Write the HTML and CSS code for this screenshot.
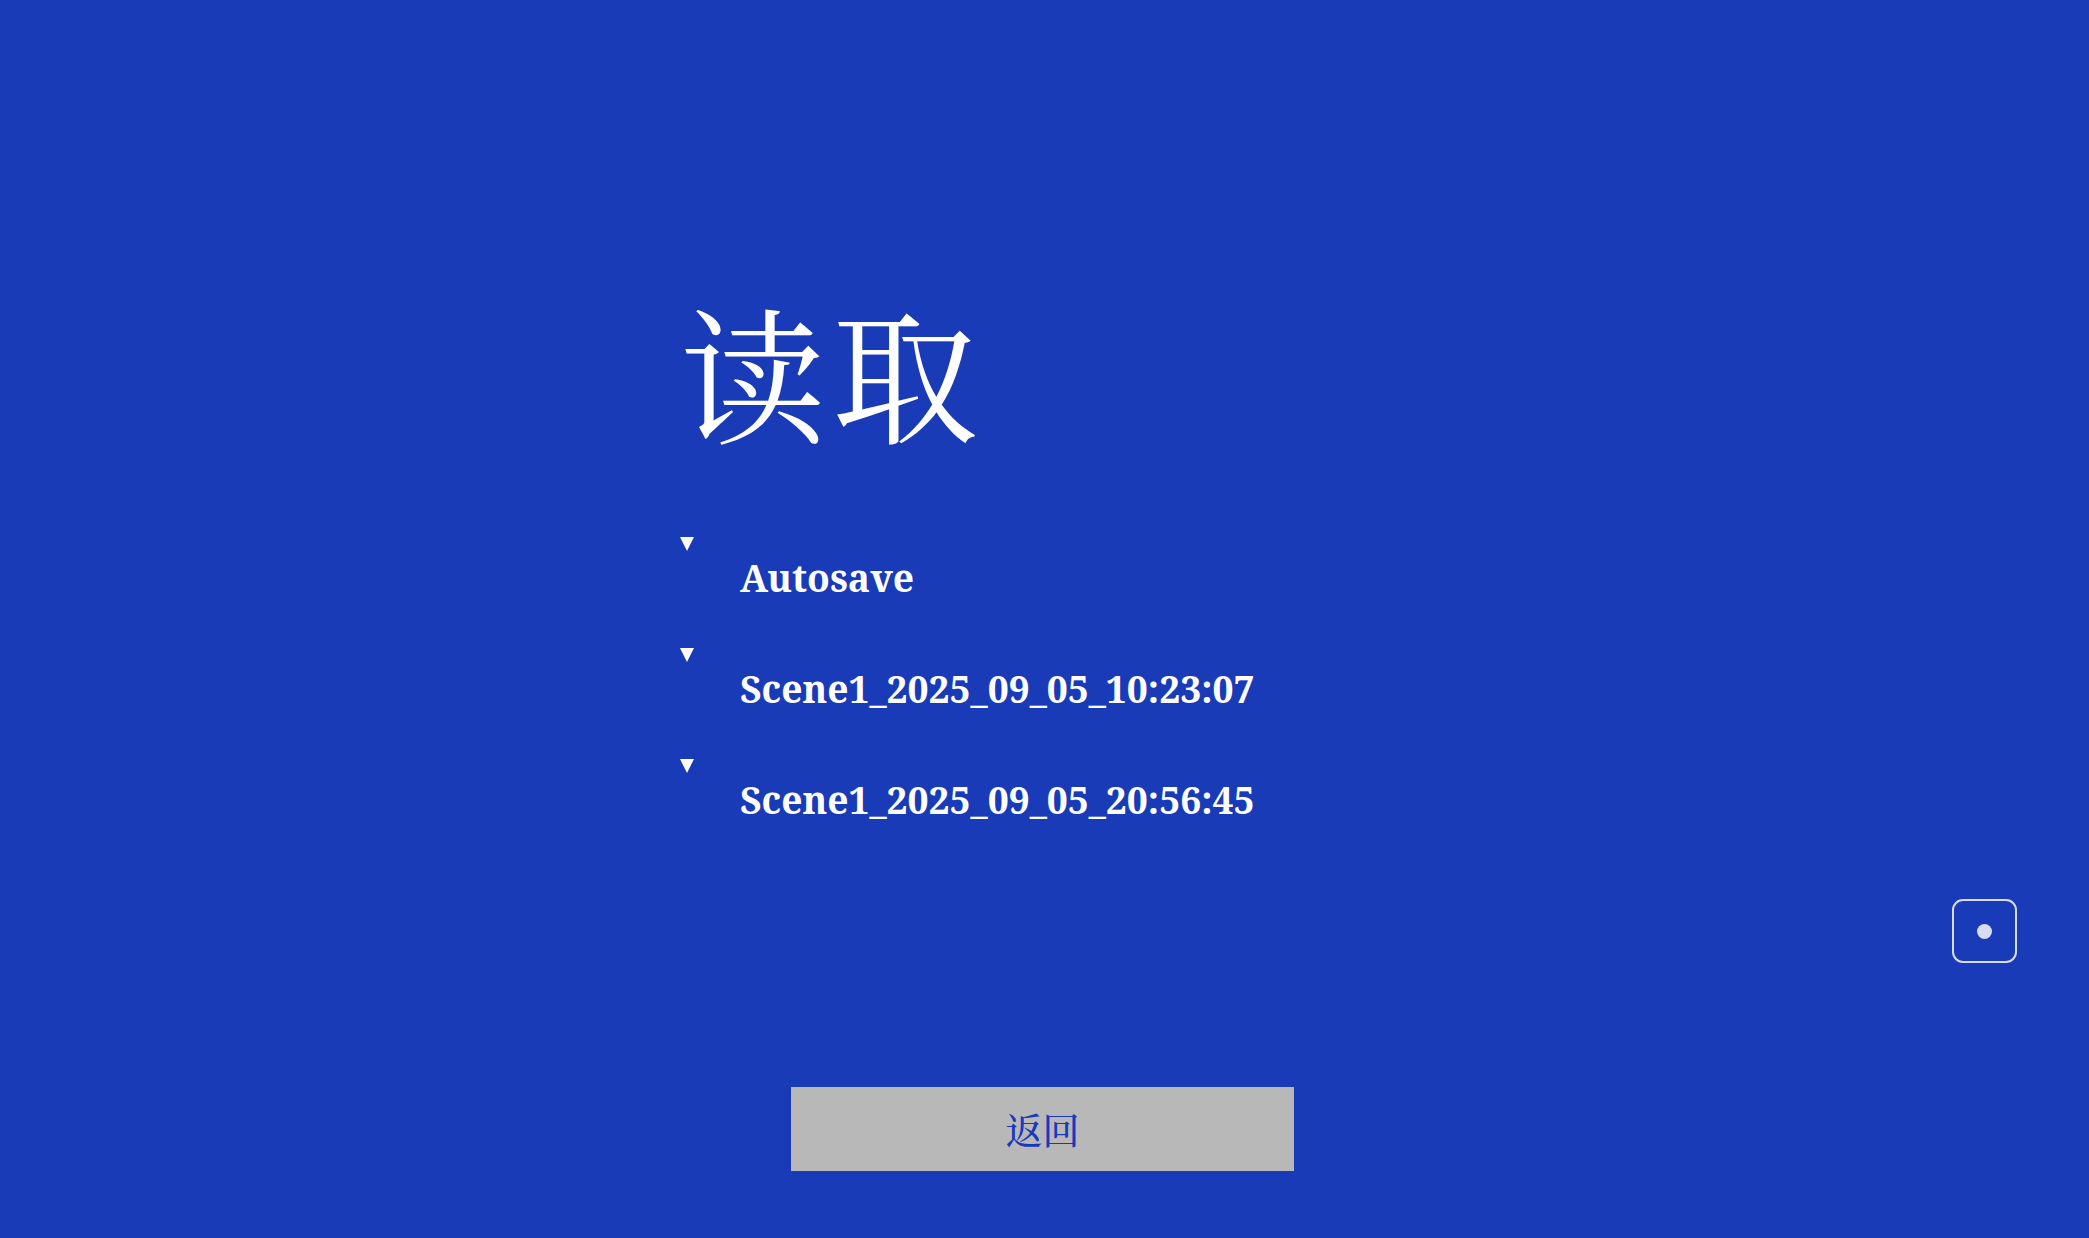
FILE: index.html
```html
<!DOCTYPE html>
<html lang="zh">
<head>
<meta charset="utf-8">
<title>读取</title>
<link rel="stylesheet" href="styles.css">
</head>
<body>
<main class="page">
  <section class="panel">
    <h1 class="title">读取</h1>
    <ul class="saves">
      <li class="save"><span class="marker"></span><span class="name">Autosave</span></li>
      <li class="save"><span class="marker"></span><span class="name">Scene1_2025_09_05_10:23:07</span></li>
      <li class="save"><span class="marker"></span><span class="name">Scene1_2025_09_05_20:56:45</span></li>
    </ul>
    <button class="back">返回</button>
  </section>
  <div class="corner"><span class="dot"></span></div>
</main>
</body>
</html>
```
FILE: styles.css
```css
html, body {
  margin: 0;
  padding: 0;
  height: 100%;
}
body {
  background: #193bb7;
  color: #ffffff;
  font-family: "Noto Serif", "Noto Serif CJK SC", serif;
  overflow: hidden;
}
.page {
  position: relative;
  height: 100%;
}
.panel {
  width: 729px;
  margin: 0 auto;
  padding-top: 296px;
  display: flex;
  flex-direction: column;
}
.title {
  margin: 0;
  font-family: "Noto Serif CJK SC", serif;
  font-size: 146px;
  font-weight: normal;
  letter-spacing: 6px;
  line-height: 1;
  height: 145px;
}
.saves {
  list-style: none;
  margin: 96px 0 0;
  padding: 0;
}
.save {
  display: flex;
  flex-direction: column;
  align-items: flex-start;
  height: 111px;
}
.marker {
  width: 14px;
  height: 14px;
  background: #fff;
  clip-path: polygon(0 0, 100% 0, 50% 100%);
}
.name {
  margin-top: 8px;
  padding-left: 60px;
  font-size: 37.2px;
  font-weight: bold;
  line-height: 1;
}
.back {
  align-self: center;
  margin-top: 217px;
  margin-right: 4px;
  width: 503px;
  height: 84px;
  padding: 0;
  border: none;
  background: #b8b8b8;
  color: #1838bd;
  font-family: "Noto Serif CJK SC", serif;
  font-size: 37px;
  font-weight: 500;
}
.corner {
  position: absolute;
  left: 1952px;
  top: 899px;
  width: 61px;
  height: 60px;
  border: 2px solid #d8dcf2;
  border-radius: 11px;
  display: flex;
  align-items: center;
  justify-content: center;
}
.dot {
  width: 15px;
  height: 15px;
  border-radius: 50%;
  background: #d8dcf2;
}
```
